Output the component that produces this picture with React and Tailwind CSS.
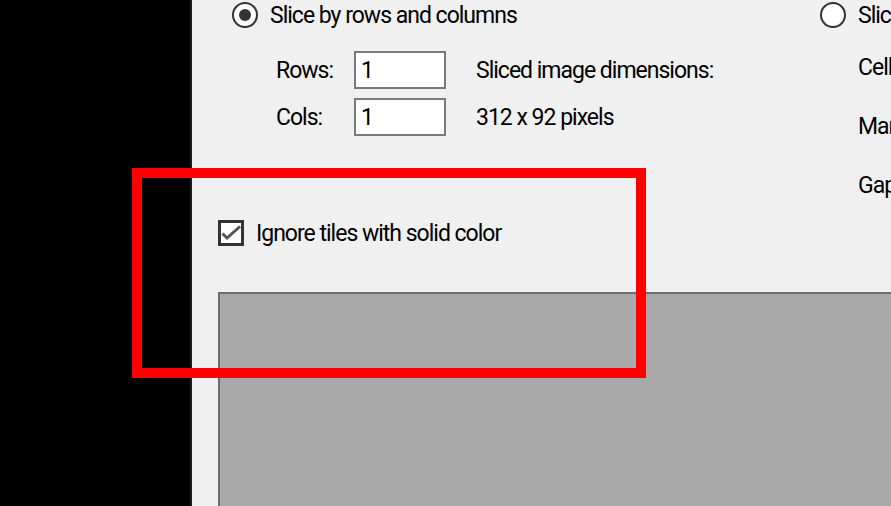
import React from 'react';

const font = { fontFamily: 'Roboto, "Noto Sans", sans-serif' };

const Radio = ({ checked }) => (
    <div className="w-[26px] h-[26px] rounded-full border-2 border-[#333333] bg-white flex items-center justify-center shrink-0">
        {checked && <div className="w-[12px] h-[12px] rounded-full bg-[#333333]" />}
    </div>
);

const Field = ({ label, value, note }) => (
    <div className="flex items-center h-[38px]">
        <span className="w-[78px]">{label}</span>
        <div className="w-[92px] h-[38px] border-2 border-[#7a7a7a] bg-white flex items-center px-[5px]">{value}</div>
        <span className="ml-[30px]">{note}</span>
    </div>
);

export default function App() {
    return (
        <div className="relative flex w-[891px] h-[506px] overflow-hidden text-[23px] tracking-[-1px] text-black leading-none" style={font}>
            <div className="w-[190px] bg-black" />
            <div className="w-[2px] bg-[#1a1a1a]" />
            <div className="flex-1 bg-[#f0f0f0] flex flex-col min-w-0">
                <div className="flex h-[292px]">
                    {/* left options */}
                    <div className="w-[628px] shrink-0 flex flex-col">
                        <div className="flex items-center gap-[12px] pl-[40px] pt-[2px]">
                            <Radio checked />
                            <span>Slice by rows and columns</span>
                        </div>
                        <div className="flex flex-col gap-[9px] pl-[84px] mt-[23px]">
                            <Field label="Rows:" value="1" note="Sliced image dimensions:" />
                            <Field label="Cols:" value="1" note="312 x 92 pixels" />
                        </div>
                        <div className="flex items-center gap-[12px] pl-[26px] mt-[84px]">
                            <div className="w-[26px] h-[26px] border-[3px] border-[#333333] bg-white shrink-0">
                                <svg width="20" height="20" viewBox="0 0 20 20">
                                    <path d="M1.5 10.5 L6 15 L19 3.5" fill="none" stroke="#555555" strokeWidth="3" />
                                </svg>
                            </div>
                            <span>Ignore tiles with solid color</span>
                        </div>
                    </div>
                    {/* right options */}
                    <div className="flex flex-col whitespace-nowrap">
                        <div className="flex items-center gap-[12px] pt-[2px]">
                            <Radio />
                            <span>Slice by cell size</span>
                        </div>
                        <div className="flex flex-col gap-[40px] pl-[38px] mt-[30px]">
                            <span className="h-[19px] flex items-center">Cell size:</span>
                            <span className="h-[19px] flex items-center">Margin:</span>
                            <span className="h-[19px] flex items-center">Gap:</span>
                        </div>
                    </div>
                </div>
                <div className="ml-[26px] flex-1 border-l-2 border-t-2 border-[#6d6d6d] bg-[#a9a9a9]" />
            </div>
            <div className="absolute left-[132px] top-[168px] w-[514px] h-[210px] border-[10px] border-[#ff0000]" />
        </div>
    );
}
